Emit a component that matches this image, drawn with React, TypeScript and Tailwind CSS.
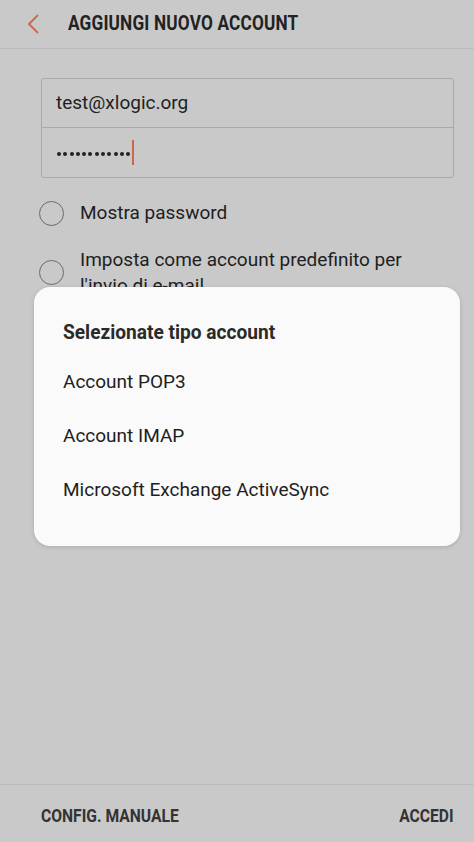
import React from "react";

const cond = { fontFamily: "Roboto, 'Liberation Sans', sans-serif" };

function Radio() {
  return <div className="w-[25px] h-[25px] rounded-full border-[1.5px] border-[#6b6b6b] shrink-0" />;
}

export default function App() {
  return (
    <div className="relative w-[474px] h-[842px] bg-[#c9c9c9] flex flex-col overflow-hidden text-[#1e1e1e]" style={{ fontFamily: "Roboto, 'Liberation Sans', sans-serif" }}>
      {/* header */}
      <div className="h-[49px] shrink-0 flex items-center border-b border-[#bcbcbc]">
        <div className="w-[68px] h-full flex items-center pl-[26px]">
          <svg width="14" height="22" viewBox="0 0 14 22">
            <path d="M12 2 L3 11 L12 20" fill="none" stroke="#c8694c" strokeWidth="1.8" />
          </svg>
        </div>
        <span className="inline-block origin-left scale-x-[0.82] text-[21px] font-bold tracking-[0.2px] text-[#222] whitespace-nowrap" style={cond}>
          AGGIUNGI NUOVO ACCOUNT
        </span>
      </div>

      {/* form */}
      <div className="flex-1 flex flex-col px-[41px] pt-[29px]">
        <div className="w-[413px] border border-[#a9a9a9] rounded-[3px] flex flex-col">
          <div className="h-[49px] flex items-center px-[14px] text-[19px] border-b border-[#a9a9a9]">test@xlogic.org</div>
          <div className="h-[49px] flex items-center pl-[15px]">
            <div className="flex items-center gap-[2.3px] mt-[2px]">
              {Array.from({ length: 12 }).map((_, i) => (
                <span key={i} className="w-[4px] h-[4px] rounded-full bg-[#222]" />
              ))}
            </div>
            <span className="ml-[2px] w-[2px] h-[25px] bg-[#c8694c]" />
          </div>
        </div>

        <div className="flex items-center gap-[16px] mt-[21px] -ml-[2px]">
          <Radio />
          <span className="text-[19px]">Mostra password</span>
        </div>
        <div className="flex items-center gap-[16px] mt-[19px] -ml-[2px]">
          <Radio />
          <span className="text-[19px] leading-[26px]">Imposta come account predefinito per l'invio di e-mail</span>
        </div>
      </div>

      {/* footer */}
      <div className="h-[58px] shrink-0 border-t border-[#bcbcbc] flex items-center justify-between pl-[41px] pr-[20px] pt-[3px]">
        <span className="inline-block origin-left scale-x-[0.87] text-[18px] font-bold text-[#333] whitespace-nowrap" style={cond}>CONFIG. MANUALE</span>
        <span className="inline-block origin-right scale-x-[0.87] text-[18px] font-bold text-[#333] whitespace-nowrap" style={cond}>ACCEDI</span>
      </div>

      {/* dialog */}
      <div className="absolute left-[34px] top-[287px] w-[426px] h-[259px] bg-[#fafafa] rounded-[16px] shadow-[0_1px_4px_rgba(0,0,0,0.15)] flex flex-col px-[29px] pt-[30px]">
        <span className="inline-block origin-left scale-x-[0.91] text-[21px] font-bold text-[#2a2a2a] whitespace-nowrap" style={cond}>Selezionate tipo account</span>
        <div className="flex flex-col text-[19px] text-[#1e1e1e]">
          <div className="h-[54px] flex items-center mt-[7px]">Account POP3</div>
          <div className="h-[54px] flex items-center">Account IMAP</div>
          <div className="h-[54px] flex items-center">Microsoft Exchange ActiveSync</div>
        </div>
      </div>
    </div>
  );
}
